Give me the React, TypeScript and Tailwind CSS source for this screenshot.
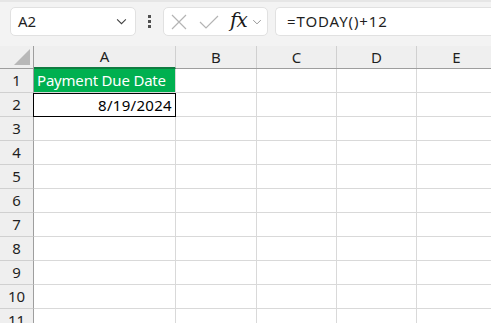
const cols = [
  { name: "A", w: "w-[142px]" },
  { name: "B", w: "w-[81px]" },
  { name: "C", w: "w-[80px]" },
  { name: "D", w: "w-[80px]" },
  { name: "E", w: "w-[80px]" },
];

const rows = [1, 2, 3, 4, 5, 6, 7, 8, 9, 10, 11];

function Chevron({ className }: { className?: string }) {
  return (
    <svg viewBox="0 0 12 8" className={className} fill="none" stroke="currentColor" strokeWidth="1.2">
      <path d="M1 1.5 L6 6.5 L11 1.5" />
    </svg>
  );
}

export default function App() {
  return (
    <div className="w-[491px] h-[323px] overflow-hidden bg-white font-['Noto_Sans','Open_Sans',sans-serif] text-[#1f1f1f]">
      {/* Toolbar */}
      <div className="h-[46px] bg-[#f3f3f3] border-t-2 border-[#e6e6e6] flex items-start pt-[5px]">
        <div className="ml-[10px] w-[126px] h-[29px] bg-white border border-[#e1e1e1] rounded-[5px] flex items-center pl-[7px] pr-[8px]">
          <span className="text-[15px] flex-1">A2</span>
          <Chevron className="w-[11px] h-[7px] text-[#404040]" />
        </div>
        <div className="w-[27px] h-[29px] flex flex-col items-center justify-center gap-[2px]">
          <div className="w-[3px] h-[3px] bg-[#505050]" />
          <div className="w-[3px] h-[3px] bg-[#505050]" />
          <div className="w-[3px] h-[3px] bg-[#505050]" />
        </div>
        <div className="w-[105px] h-[29px] bg-white border border-[#e1e1e1] rounded-[5px] flex items-center pl-[7px]">
          <svg viewBox="0 0 16 16" className="w-[16px] h-[16px] text-[#b4b4b4]" fill="none" stroke="currentColor" strokeWidth="1.2">
            <path d="M1 1 L15 15 M15 1 L1 15" />
          </svg>
          <svg viewBox="0 0 20 14" className="ml-[12px] w-[20px] h-[14px] text-[#b4b4b4]" fill="none" stroke="currentColor" strokeWidth="1.2">
            <path d="M1 7 L7 13 L19 1" />
          </svg>
          <span className="ml-[11px] font-['DejaVu_Serif',serif] italic text-[20px] leading-none text-[#1a1a1a] -mt-[3px] tracking-[-1px]">fx</span>
          <Chevron className="ml-[5px] w-[10px] h-[6px] text-[#8a8a8a]" />
        </div>
        <div className="ml-[7px] flex-1 h-[29px] bg-white border border-[#e1e1e1] rounded-l-[5px] border-r-0 flex items-center pl-[11px]">
          <span className="text-[15px] tracking-[0.9px]">=TODAY()+12</span>
        </div>
      </div>

      {/* Column headers */}
      <div className="flex h-[23px] bg-[#efefef] border-b border-[#9e9e9e]">
        <div className="w-[34px] shrink-0 border-r border-[#9e9e9e] relative">
          <div className="absolute right-[3px] bottom-[3px] w-0 h-0 border-l-[16px] border-l-transparent border-b-[16px] border-b-[#b8b8b8]" />
        </div>
        {cols.map((c) => (
          <div
            key={c.name}
            className={`${c.w} shrink-0 border-r border-[#d0d0d0] flex items-center justify-center text-[15px] ${
              c.name === "A" ? "border-b-2 border-b-[#107c41] -mb-[1px]" : ""
            }`}
          >
            {c.name}
          </div>
        ))}
      </div>

      {/* Rows */}
      {rows.map((r) => (
        <div key={r} className="flex h-[24px]">
          <div className="w-[34px] shrink-0 bg-[#efefef] border-r border-[#9e9e9e] border-b border-b-[#d0d0d0] flex items-center justify-center text-[15px]">
            {r}
          </div>
          {cols.map((c) => {
            if (r === 1 && c.name === "A") {
              return (
                <div
                  key={c.name}
                  className={`${c.w} shrink-0 bg-[#00b050] border-r border-b border-[#d9d9d9] flex items-center pl-[3px] text-white text-[15px] tracking-[-0.2px] whitespace-nowrap`}
                >
                  Payment Due Date
                </div>
              );
            }
            if (r === 2 && c.name === "A") {
              return (
                <div
                  key={c.name}
                  className={`${c.w} shrink-0 border border-black -ml-[1px] w-[143px] flex items-center justify-end pr-[3px] text-[15px] tracking-[0.3px] text-black`}
                >
                  8/19/2024
                </div>
              );
            }
            return (
              <div key={c.name} className={`${c.w} shrink-0 border-r border-b border-[#d9d9d9]`} />
            );
          })}
        </div>
      ))}
    </div>
  );
}
